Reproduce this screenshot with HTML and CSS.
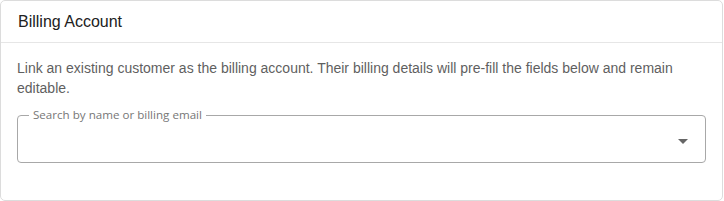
FILE: index.html
```html
<!DOCTYPE html>
<html>
<head>
<meta charset="utf-8">
<link rel="stylesheet" href="styles.css">
</head>
<body>
<div class="card">
  <div class="card-header">Billing Account</div>
  <div class="card-body">
    <p class="desc">Link an existing customer as the billing account. Their billing details will pre-fill the fields below and remain editable.</p>
    <fieldset class="field">
      <legend class="field-label">Search by name or billing email</legend>
      <div class="field-row">
        <span class="field-input"></span>
        <svg class="caret" width="10" height="5" viewBox="0 0 10 5"><path d="M0 0h10L5 5z" fill="#666"/></svg>
      </div>
    </fieldset>
  </div>
</div>
</body>
</html>
```
FILE: styles.css
```css
html, body {
  margin: 0;
  padding: 0;
  background: #fff;
}
body {
  font-family: "Liberation Sans", Arial, sans-serif;
}
.card {
  width: 723px;
  height: 201px;
  box-sizing: border-box;
  border: 1px solid #dcdcdc;
  border-radius: 5px;
  background: #fff;
}
.card-header {
  height: 41px;
  display: flex;
  align-items: center;
  padding: 0 17px;
  font-size: 16px;
  color: #212121;
  border-bottom: 1px solid #e6e6e6;
}
.card-body {
  padding: 15px 16px 0 16px;
}
.desc {
  margin: 0;
  font-size: 14px;
  line-height: 20px;
  color: #5f5f5f;
}
.field {
  margin: 10px 0 0 0;
  padding: 0 17px 0 12px;
  border: 1px solid #a8a8a8;
  border-radius: 4px;
  min-width: 0;
}
.field-label {
  margin-left: -1px;
  padding: 0 4px;
  font-family: "Open Sans", "Noto Sans", sans-serif;
  font-size: 11.6px;
  line-height: 14px;
  color: #777;
}
.field-row {
  height: 42px;
  display: flex;
  align-items: center;
  justify-content: space-between;
  margin-top: -2px;
}
.caret {
  display: block;
  margin-top: 1px;
}
```
